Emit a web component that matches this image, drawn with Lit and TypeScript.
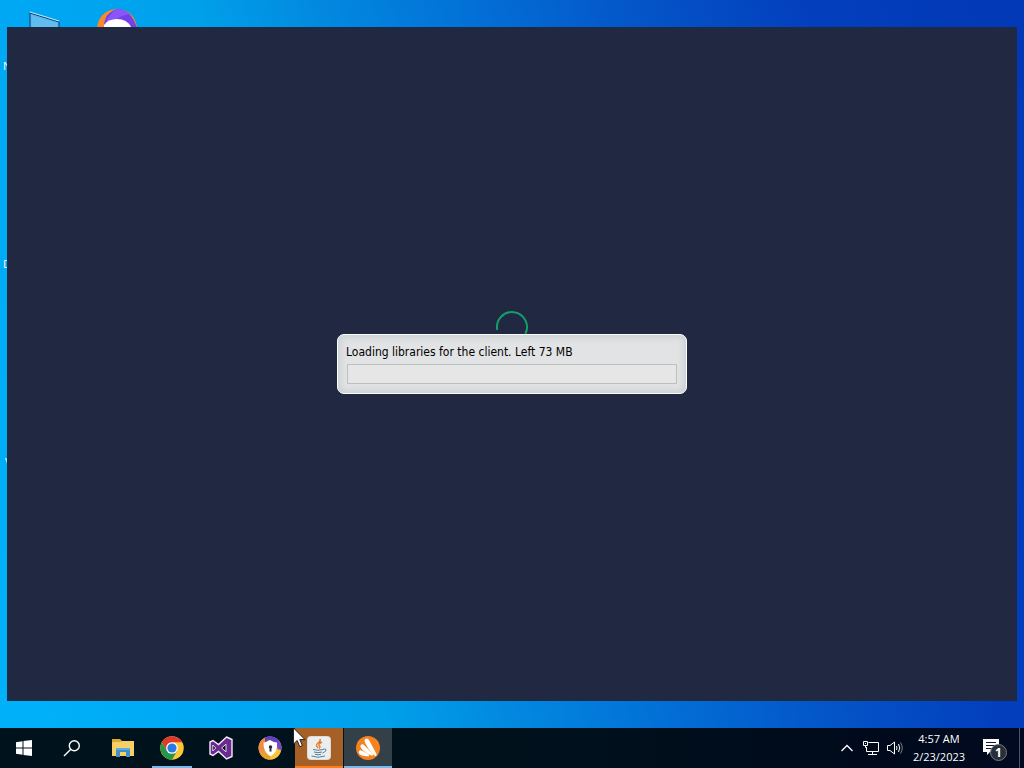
import { LitElement, html, css, svg } from "lit";
import { customElement, property } from "lit/decorators.js";

const shieldRing = svg`
  <circle cx="24" cy="24" r="23" fill="#f2b234"/>
  <path d="M13 4A23 23 0 0 1 47 24Q46 31 42 36L36 14 24 9Z" fill="#7447d8"/>
  <path d="M13 4A23 23 0 0 1 43 11L34 12Q24 4 14 13Z" fill="#5f3fc4"/>
  <path d="M46 28A23 23 0 0 1 12 44L27 38 38 26Z" fill="#f4c63a"/>
  <path d="M2 18Q4 8 14 3L13 20 20 37 9 41Q-1 31 2 18Z" fill="#ef8b43"/>
  <path d="M4 34Q10 44 22 47L28 38 14 28Z" fill="#e9a02a"/>
  <path d="M11 13Q18 13 24 8Q30 13 38 13Q40 32 25 41Q10 32 11 13Z" fill="#fff"/>`;

@customElement("task-button")
class TaskButton extends LitElement {
  @property() label = "";
  @property({ reflect: true }) state = "";
  static styles = css`
    :host { display: block; width: 48px; height: 40px; }
    button {
      width: 100%; height: 100%; padding: 0; border: 0; background: none;
      display: grid; place-items: center; position: relative; color: #fff;
    }
    :host([state="running"]) button::after,
    :host([state="active"]) button::after,
    :host([state="alert"]) button::after {
      content: ""; position: absolute; bottom: 0; left: 4px; right: 4px; height: 2px; background: #76b9ed;
    }
    :host([state="active"]) button { background: #334047; }
    :host([state="alert"]) button { background: #a65f25; }
    :host([state="active"]) button::after { left: 0; right: 0; }
    :host([state="alert"]) button::after { left: 0; right: 0; background: #ff7b1c; }
  `;
  render() {
    return html`<button type="button" aria-label=${this.label}><slot></slot></button>`;
  }
}

@customElement("loading-dialog")
class LoadingDialog extends LitElement {
  static styles = css`
    :host { display: block; box-sizing: border-box; width: 350px; padding: 8px 9px 9px;
      border: 1px solid #fafcfd; border-radius: 7px; background: #e1e3e4;
      box-shadow: inset 0 0 7px 2px #c8cfd1;
      color: #000; font: 12px/18px "DejaVu Sans Condensed", "DejaVu Sans", sans-serif; }
    .message { display: block; white-space: nowrap; margin-left: -1px; }
    .track { box-sizing: border-box; height: 20px; margin-top: 3px; border: 1px solid #b9c2c1; background: #e6e6e6; }
  `;
  render() {
    return html`
      <span class="message" id="message">Loading libraries for the client. Left 73 MB</span>
      <div class="track" role="progressbar" aria-labelledby="message"></div>`;
  }
}

@customElement("app-root")
class AppRoot extends LitElement {
  static styles = css`
    :host { display: flex; flex-direction: column; height: 100vh; overflow: hidden;
      font: 12px/18px "Open Sans", "Noto Sans", sans-serif; color: #fff; }
    .desktop { flex: 1; position: relative; overflow: hidden;
      background: linear-gradient(75deg, #00b2f9 0%, #00a8f4 16%, #00a0ea 32%, #028be0 41%, #0277da 51%, #0455c8 68%, #033fbd 82%, #0238b5 100%); }
    .shortcut { position: absolute; }
    .monitor { left: 28px; top: 11px; }
    .browser { left: 96px; top: 8px; }
    .name { position: absolute; left: 3px; font-size: 11px; }
    .first { top: 57px; }
    .second { top: 255px; }
    .third { top: 451px; left: 5px; }
    .window { position: absolute; inset: 27px 7px; display: grid; place-items: center; background: #202842;
      box-shadow: inset 0 0 0 1px #1b2a45; }
    .loader { display: grid; place-items: center; }
    .spinner, loading-dialog { grid-area: 1 / 1; }
    .spinner { width: 34px; height: 34px; margin-bottom: 74px; }
    .taskbar { height: 40px; display: flex; background: linear-gradient(90deg, #00131d, #00111c 50%, #000a1c 85%, #010a20); }
    .apps { display: flex; gap: 1px; margin-left: 3px; }
    .tray { margin-left: auto; display: flex; align-items: center; }
    .tray button { padding: 0; border: 0; background: none; color: inherit; font: inherit; height: 40px; display: grid; place-items: center; }
    .tray .small { width: 24px; }
    .tray .clock { width: 64px; white-space: nowrap; font-size: 11px; }
    .clock .lines { display: grid; justify-items: center; }
    .tray .notes { width: 46px; margin-right: 2px; }
    .peek { width: 5px; height: 40px; box-sizing: border-box; border-left: 1px solid #4a5364; }
    .badge { font: bold 12px "Open Sans", sans-serif; }
    svg { display: block; }
    .cursor { position: absolute; left: 293px; bottom: 20px; pointer-events: none; }
  `;
  render() {
    return html`
      <main class="desktop">
        <svg class="shortcut monitor" width="34" height="30" viewBox="0 0 34 30">
          <path d="M2 2 31 11V30H2Z" fill="#56b8ec" stroke="#073d69"/>
          <path d="M2 1 31 10" stroke="#c5eaff" fill="none"/>
          <path d="M4 5 29 12V30H4Z" fill="#61bdf0"/>
        </svg>
        <svg class="shortcut browser" width="42" height="42" viewBox="0 0 42 42">
          <circle cx="21" cy="21" r="20" fill="#f58b29"/>
          <path d="M8 19Q8 5 21 1Q35 1 41 20L36 24Z" fill="#7540e9"/>
          <path d="M9 19Q11 6 22 1Q29 2 33 6Q23 8 18 13Z" fill="#8b55fb"/>
          <path d="M8 17Q12 11 21 11Q31 11 35 19V30H8Z" fill="#fff"/>
        </svg>
        <span class="name first">N</span>
        <span class="name second">D</span>
        <span class="name third">v</span>
        <section class="window">
          <div class="loader">
            <svg class="spinner" viewBox="0 0 34 34">
              <path d="M2.3 20A15 15 0 1 1 30.3 24" fill="none" stroke="#159e69" stroke-width="2"/>
            </svg>
            <loading-dialog></loading-dialog>
          </div>
        </section>
      </main>
      <nav class="taskbar">
        <task-button label="Start">
          <svg width="16" height="16" viewBox="0 0 16 16" fill="#fff"><path d="M0 2.3 6.5 1.3V7.5H0ZM7.5 1.1 16 0V7.5H7.5ZM0 8.5H6.5V14.7L0 13.8ZM7.5 8.5H16V16L7.5 14.9Z"/></svg>
        </task-button>
        <task-button label="Search">
          <svg width="18" height="18" viewBox="0 0 18 18" fill="none" stroke="#fff" stroke-width="1.4"><circle cx="11.3" cy="6.7" r="5"/><path d="M7.8 10.2 1 17"/></svg>
        </task-button>
        <div class="apps">
          <task-button label="File Explorer">
            <svg width="22" height="18" viewBox="0 0 22 18">
              <path d="M0 0H8L10 2H22V17H0Z" fill="#dea72e"/><path d="M1 3H9L10 2H22V17H0V4Z" fill="#f6d066"/>
              <path d="M4 9H18V18H14V13H8V18H4Z" fill="#3e91c8"/><path d="M4 9H18V11H4Z" fill="#5cadde"/>
            </svg>
          </task-button>
          <task-button label="Chrome" state="running">
            <svg width="24" height="24" viewBox="0 0 48 48">
              <circle cx="24" cy="24" r="23.5" fill="#fcc934"/>
              <path d="M3.7 12.3A23.5 23.5 0 0 1 44.4 12.3H24L13.8 29.9Z" fill="#df392e"/>
              <path d="M3.7 12.3A23.5 23.5 0 0 0 24 47.5L34.2 29.9H13.8Z" fill="#269649"/>
              <circle cx="24" cy="24" r="11.7" fill="#fff"/><circle cx="24" cy="24" r="9.2" fill="#287be5"/>
            </svg>
          </task-button>
          <task-button label="Visual Studio">
            <svg width="24" height="24" viewBox="0 0 24 24">
              <path d="M17.5 1 23 3.5V20.5L17.5 23 9.5 15.5 4 19.5 1 18V6L4 4.5 9.5 8.5Z" fill="#6b2a91" stroke="#f4ecf8" stroke-width="1.4"/>
              <path d="M3.8 9V15L6.8 12ZM12.6 12 17 15.8V8.2Z" fill="#071522" stroke="#f1e5f6" stroke-width=".9"/>
            </svg>
          </task-button>
          <task-button label="Secure Browser">
            <svg width="24" height="24" viewBox="0 0 48 48">${shieldRing}<circle cx="25" cy="22" r="3.5" fill="#20283f"/><path d="M23.5 22H26.5L27 31H23Z" fill="#20283f"/></svg>
          </task-button>
          <task-button label="Java" state="alert">
            <svg width="24" height="24" viewBox="0 0 24 24">
              <rect x=".5" y=".5" width="23" height="23" rx="3" fill="#eceeed" stroke="#d9dcda"/>
              <path d="M13 3Q14 5 11 7Q8 9 11 12M15 6Q11 8 12 9.5Q14 10.5 12 12.5" fill="none" stroke="#e87929" stroke-width="1.4"/>
              <path d="M6 13.5Q11 15 16 13.5M7 16Q11 17.3 15 16M8 18.3Q11 19.3 14 18.3M4.5 20Q11 22.5 18 20M16 13.3Q20 12.3 18.5 15Q17.5 16.5 15.5 17" fill="none" stroke="#527f99" stroke-width="1"/>
            </svg>
          </task-button>
          <task-button label="Avast" state="active">
            <svg width="24" height="24" viewBox="0 0 24 24">
              <circle cx="12" cy="12" r="12" fill="#f58220"/>
              <path d="M9 3Q11.5 1.5 13 4L20.5 18Q21 20.5 19 20Q13 15 9 6.5Q8 4.5 9 3Z" fill="#fff"/>
              <path d="M5 8.8Q6.8 7.5 8 9L16.5 17.5Q18 20 15.5 19.5Q8 16.5 5 12Q3.5 10 5 8.8Z" fill="#fff"/>
              <path d="M3 15Q4.3 13.8 6 14.7L12.5 18.2Q14 20.3 11.8 20.2Q5.5 20.5 3.3 17.8Q2.3 16.3 3 15Z" fill="#fff"/>
            </svg>
          </task-button>
        </div>
        <div class="tray">
          <button class="small" type="button" aria-label="Show hidden icons"><svg width="14" height="8" viewBox="0 0 14 8"><path d="M1.5 7 7 1.5 12.5 7" fill="none" stroke="#fff" stroke-width="1.3"/></svg></button>
          <button class="small" type="button" aria-label="Network"><svg width="18" height="16" viewBox="0 0 18 16" fill="none" stroke="#fff"><path d="M6.5 2.5H16.5V11.5H4.5V7M10.5 12V14M6 14.5H15M1.5 1.5H5.5V5.5H1.5ZM3.5 5.5V7.5H5M3.5 3V4"/></svg></button>
          <button class="small" type="button" aria-label="Volume"><svg width="18" height="16" viewBox="0 0 18 16" fill="none" stroke="#fff"><path d="M1.5 5.5H4L8.5 2V14L4 10.5H1.5ZM10.5 6Q11.5 8 10.5 10M12.5 4Q15 8 12.5 12"/><path d="M14.5 2.5Q18 8 14.5 13.5" stroke="#7b8290"/></svg></button>
          <button class="clock" type="button"><span class="lines"><span>4:57 AM</span><span>2/23/2023</span></span></button>
          <button class="notes" type="button" aria-label="Notifications">
            <svg width="26" height="26" viewBox="0 0 26 26">
              <path d="M2 4H18V17H9L6 20V17H2Z" fill="#fff"/><path d="M5 7.5H15M5 10.5H15M5 13.5H12" stroke="#111827"/>
              <circle cx="17.5" cy="17.5" r="8" fill="#292f39" stroke="#747982"/>
              <text class="badge" x="17.5" y="22" text-anchor="middle" fill="#fff">1</text>
            </svg>
          </button>
          <div class="peek"></div>
        </div>
      </nav>
      <svg class="cursor" width="14" height="21" viewBox="0 0 14 21"><path d="M.5 1V17L4.2 13.5 6.8 19.8 9.4 18.6 6.8 12.6H12Z" fill="#fff" stroke="#222"/></svg>
    `;
  }
}
